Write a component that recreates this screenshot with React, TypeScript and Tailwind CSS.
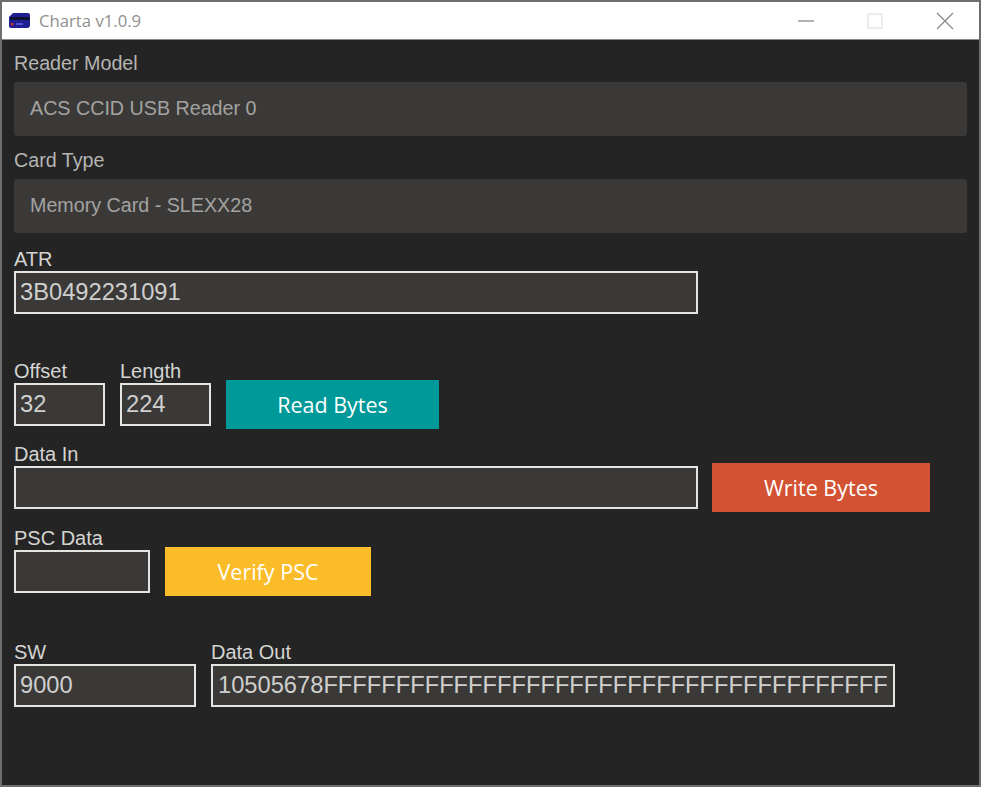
const sans = "font-['Liberation_Sans',Arial,sans-serif]";

function Select({ text, className = "" }: { text: string; className?: string }) {
  return (
    <div className={`h-[54px] w-[953px] rounded-[3px] bg-[#3a3938] pl-[16px] flex items-center text-[19.7px] text-[#a3a3a1] ${className}`}>
      {text}
    </div>
  );
}

function Label({ text }: { text: string }) {
  return <div className="h-[21px] leading-[19px] text-[20px] text-[#d4d4d2]">{text}</div>;
}

function Field({ value, w, pad = "pl-[4px]" }: { value?: string; w: string; pad?: string }) {
  return (
    <div className={`${w} h-[43px] shrink-0 overflow-hidden whitespace-nowrap border-2 border-[#e4e4e2] bg-[#3a3938] ${pad} flex items-center text-[23.7px] text-[#cfcfcd]`}>
      {value}
    </div>
  );
}

function Action({ text, w, color }: { text: string; w: string; color: string }) {
  return (
    <div className={`${w} h-[49px] shrink-0 ${color} pt-[2px] flex items-center justify-center text-[21.5px] text-white font-['Open_Sans',sans-serif]`}>
      {text}
    </div>
  );
}

export default function App() {
  return (
    <div className={`w-[981px] h-[787px] overflow-hidden border-2 border-[#6e6e6e] bg-[#242424] ${sans} flex flex-col`}>
      <div className="h-[38px] shrink-0 bg-white flex items-center pl-[6px] border-b border-[#8a8a8a]">
        <svg width="23" height="18" viewBox="0 0 23 18">
          <path d="M5 1 H20 Q22 1 22 3 V13 Q22 16 19 16 H3 Q1 16 1 14 V5 Z" fill="#1f1f8f" />
          <rect x="2" y="5" width="20" height="3" fill="#101030" />
          <rect x="3" y="11" width="2.5" height="2.5" fill="#d03030" />
          <rect x="8" y="11" width="7" height="2" fill="#5050d0" />
        </svg>
        <span className="ml-[8px] text-[16.7px] text-[#8f8f8f] font-['Open_Sans',sans-serif]">Charta v1.0.9</span>
        <div className="ml-auto flex items-center">
          <svg width="18" height="18" viewBox="0 0 18 18" className="mr-[52px]"><path d="M1 9 H17" stroke="#9a9a9a" strokeWidth="1.5" /></svg>
          <svg width="16" height="16" viewBox="0 0 16 16" className="mr-[53px]"><rect x="1" y="1" width="14" height="14" fill="none" stroke="#e8e8e8" strokeWidth="1.5" /></svg>
          <svg width="18" height="18" viewBox="0 0 18 18" className="mr-[25px]"><path d="M1 1 L17 17 M17 1 L1 17" stroke="#8a8a8a" strokeWidth="1.3" /></svg>
        </div>
      </div>
      <div className="pl-[12px] flex flex-col">
        <div className="mt-[12px] h-[22px] leading-[22px] text-[19.7px] text-[#b5b5b3]">Reader Model</div>
        <Select text="ACS CCID USB Reader 0" className="mt-[8px]" />
        <div className="mt-[13px] h-[22px] leading-[22px] text-[19.7px] text-[#b5b5b3]">Card Type</div>
        <Select text="Memory Card - SLEXX28" className="mt-[8px]" />
        <div className="mt-[17px]"><Label text="ATR" /></div>
        <Field value="3B0492231091" w="w-[684px]" />
        <div className="mt-[48px] flex items-end">
          <div className="mr-[15px]"><Label text="Offset" /><Field value="32" w="w-[91px]" /></div>
          <div className="mr-[15px]"><Label text="Length" /><Field value="224" w="w-[91px]" /></div>
          <div className="mb-[-3px]"><Action text="Read Bytes" w="w-[213px]" color="bg-[#009999]" /></div>
        </div>
        <div className="mt-[19px] flex items-end">
          <div className="mr-[14px]"><Label text="Data In" /><Field w="w-[684px]" /></div>
          <div className="mb-[-3px]"><Action text="Write Bytes" w="w-[218px]" color="bg-[#d35233]" /></div>
        </div>
        <div className="mt-[20px] flex items-end">
          <div className="mr-[15px]"><Label text="PSC Data" /><Field w="w-[136px]" /></div>
          <div className="mb-[-3px]"><Action text="Verify PSC" w="w-[206px]" color="bg-[#fbbc2a]" /></div>
        </div>
        <div className="mt-[50px] flex items-end">
          <div className="mr-[15px]"><Label text="SW" /><Field value="9000" w="w-[182px]" /></div>
          <div><Label text="Data Out" /><Field value="10505678FFFFFFFFFFFFFFFFFFFFFFFFFFFFFFFFFFFFFFF" w="w-[684px]" pad="pl-[5px]" /></div>
        </div>
      </div>
    </div>
  );
}
